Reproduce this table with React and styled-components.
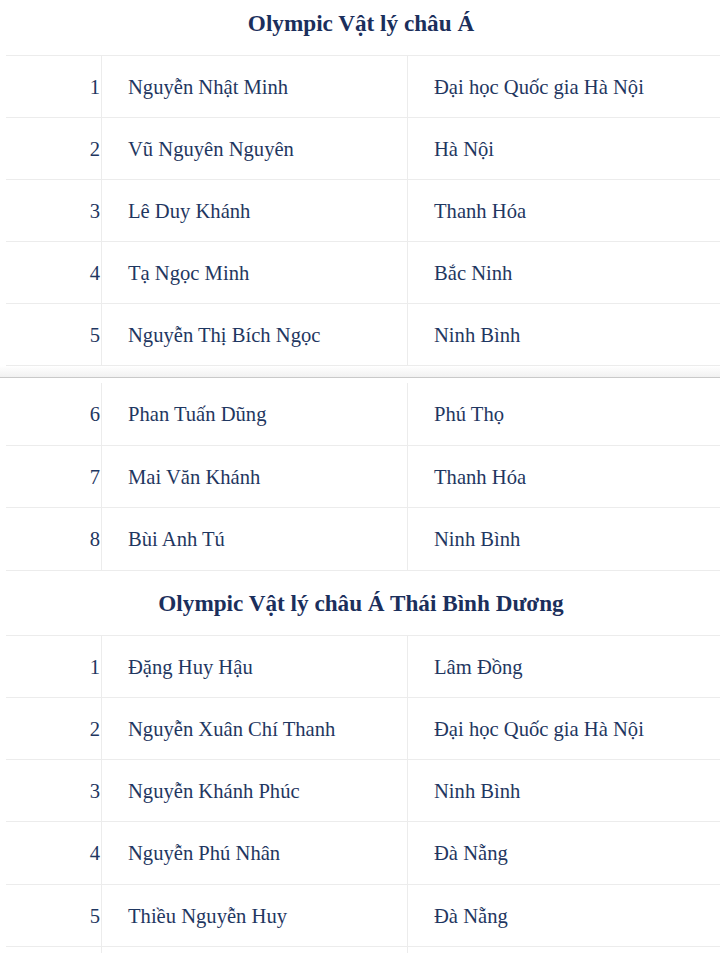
import React from 'react';
import styled, { createGlobalStyle } from 'styled-components';

const GlobalStyle = createGlobalStyle`
  body {
    margin: 0;
    background: #fff;
    font-family: "Liberation Serif", "Times New Roman", serif;
    color: #1f3761;
    overflow: hidden;
  }
`;

const Page = styled.div`
  width: 720px;
  margin-top: -8px;
`;

const Table = styled.div`
  margin-left: 6px;
`;

const Heading = styled.div`
  display: flex;
  align-items: center;
  justify-content: center;
  border-bottom: 1px solid #ececec;
  font-size: 23.2px;
  font-weight: bold;
  color: #1b2f5c;
  padding-right: 4px;
  padding-top: ${p => (p.$low ? '1px' : '0')};
  box-sizing: border-box;
  height: ${p => (p.$low ? '65px' : '64px')};
`;

const Row = styled.div`
  display: grid;
  grid-template-columns: 95px 306px 1fr;
  height: ${p => p.$h || 61}px;
  border-bottom: 1px solid #ececec;
  margin-top: ${p => (p.$gap ? '5px' : '0')};
`;

const Cell = styled.div`
  display: flex;
  align-items: center;
  font-size: 20.6px;
  white-space: nowrap;
  padding-top: 2px;
  padding-left: ${p => (p.$num ? '0' : '26px')};
  padding-right: ${p => (p.$num ? '1px' : '0')};
  justify-content: ${p => (p.$num ? 'flex-end' : 'flex-start')};
  border-left: ${p => (p.$num ? 'none' : '1px solid #ececec')};
`;

const PageBreak = styled.div`
  height: 11px;
  background: linear-gradient(to bottom, #ffffff, #f1f1f1);
  border-bottom: 1px solid #c9c9c9;
`;

const asia = [
  ['1', 'Nguyễn Nhật Minh', 'Đại học Quốc gia Hà Nội'],
  ['2', 'Vũ Nguyên Nguyên', 'Hà Nội'],
  ['3', 'Lê Duy Khánh', 'Thanh Hóa'],
  ['4', 'Tạ Ngọc Minh', 'Bắc Ninh'],
  ['5', 'Nguyễn Thị Bích Ngọc', 'Ninh Bình'],
];

const asiaMore = [
  ['6', 'Phan Tuấn Dũng', 'Phú Thọ'],
  ['7', 'Mai Văn Khánh', 'Thanh Hóa'],
  ['8', 'Bùi Anh Tú', 'Ninh Bình'],
];

const pacific = [
  ['1', 'Đặng Huy Hậu', 'Lâm Đồng'],
  ['2', 'Nguyễn Xuân Chí Thanh', 'Đại học Quốc gia Hà Nội'],
  ['3', 'Nguyễn Khánh Phúc', 'Ninh Bình'],
  ['4', 'Nguyễn Phú Nhân', 'Đà Nẵng'],
  ['5', 'Thiều Nguyễn Huy', 'Đà Nẵng'],
  ['', '', ''],
];

const Rows = ({ data, gapFirst, h }) =>
  data.map(([n, name, place], i) => (
    <Row key={i} $gap={gapFirst && i === 0} $h={h}>
      <Cell $num>{n}</Cell>
      <Cell>{name}</Cell>
      <Cell>{place}</Cell>
    </Row>
  ));

const App = () => (
  <>
    <GlobalStyle />
    <Page>
      <Table>
        <Heading>Olympic Vật lý châu Á</Heading>
        <Rows data={asia} />
      </Table>
      <PageBreak />
      <Table>
        <Rows data={asiaMore} gapFirst h={61.5} />
        <Heading $low>Olympic Vật lý châu Á Thái Bình Dương</Heading>
        <Rows data={pacific} h={61.25} />
      </Table>
    </Page>
  </>
);

export default App;
